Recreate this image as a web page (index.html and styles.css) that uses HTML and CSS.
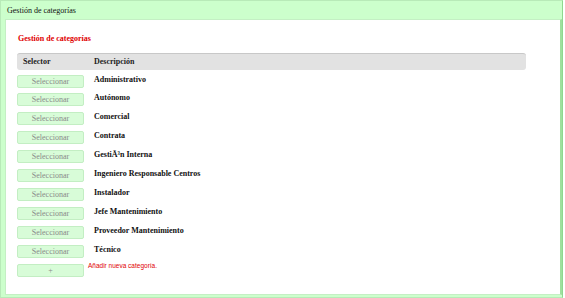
FILE: index.html
```html
<!DOCTYPE html>
<html lang="es">

<head>
  <meta charset="UTF-8">
  <title>Gestión de categorías</title>
  <link rel="stylesheet" href="styles.css">
</head>

<body>
  <div class="panel">
    <div class="panel-titulo">Gestión de categorías</div>

    <div class="contenido">
      <h2>Gestión de categorías</h2>

      <table class="categorias">
        <thead>
          <tr>
            <th class="col-selector">Selector</th>
            <th>Descripción</th>
          </tr>
        </thead>
        <tbody>
          <tr><td><button>Seleccionar</button></td><td>Administrativo</td></tr>
          <tr><td><button>Seleccionar</button></td><td>Autónomo</td></tr>
          <tr><td><button>Seleccionar</button></td><td>Comercial</td></tr>
          <tr><td><button>Seleccionar</button></td><td>Contrata</td></tr>
          <tr><td><button>Seleccionar</button></td><td>GestiÃ³n Interna</td></tr>
          <tr><td><button>Seleccionar</button></td><td>Ingeniero Responsable Centros</td></tr>
          <tr><td><button>Seleccionar</button></td><td>Instalador</td></tr>
          <tr><td><button>Seleccionar</button></td><td>Jefe Mantenimiento</td></tr>
          <tr><td><button>Seleccionar</button></td><td>Proveedor Mantenimiento</td></tr>
          <tr><td><button>Seleccionar</button></td><td>Técnico</td></tr>
          <tr class="nueva">
            <td><button>+</button></td>
            <td><span class="aviso">Añadir nueva categoría.</span></td>
          </tr>
        </tbody>
      </table>
    </div>
  </div>
</body>

</html>
```

FILE: styles.css
```css
body {
  font-family: "Liberation Serif", "Times New Roman", serif;
  background-color: #fff;
  margin: 0;
  padding: 0;
}

.panel {
  width: 561px;
  background-color: #ccffcc;
  border: 1px solid #b8eab8;
  border-right-color: #8fd88f;
  padding: 0 0 2px 0;
}

.panel-titulo {
  font-size: 8px;
  color: #111;
  padding: 5px 6px 3px;
  height: 10px;
}

.contenido {
  background-color: #fff;
  border: 1px solid #c4efc4;
  border-right: 2px solid #9fe09f;
  margin: 0 0 0 4px;
  padding: 14px 11px 0;
  height: 260px;
}

h2 {
  color: #e00000;
  font-size: 8px;
  font-weight: bold;
  margin: 0 0 10px 1px;
}

.categorias {
  width: 509px;
  border-collapse: separate;
  border-spacing: 0;
  font-size: 8px;
  line-height: 10px;
}

.categorias th {
  background-color: #e2e2e2;
  border-top: 1px solid #c8c8c8;
  text-align: left;
  font-weight: bold;
  color: #222;
  height: 16px;
  padding: 0 0 0 10px;
}

.categorias th:first-child {
  border-radius: 3px 0 0 3px;
  padding-left: 6px;
}

.categorias th:last-child {
  border-radius: 0 3px 3px 0;
}

.col-selector {
  width: 60px;
}

.categorias td {
  height: 14px;
  padding: 5px 0 0 0;
  vertical-align: top;
}

.categorias td + td {
  font-weight: bold;
  color: #111;
  height: 14px;
  padding: 5px 0 0 10px;
}

.categorias tbody tr + tr td {
  height: 15px;
  padding-top: 4px;
}

.categorias tbody tr + tr td + td {
  height: 15px;
  padding-top: 4px;
}

button {
  display: block;
  width: 67px;
  height: 13px;
  padding: 0;
  font-family: "Liberation Serif", serif;
  font-size: 8px;
  line-height: 11px;
  color: #8a8a8a;
  background-color: #d8fcd8;
  border: 1px solid #c3eec3;
  border-radius: 2px;
  cursor: pointer;
}

.categorias .nueva td + td {
  padding: 1px 0 0 4px;
  height: 18px;
}

.aviso {
  font-family: "Liberation Sans", Arial, sans-serif;
  font-weight: normal;
  font-size: 6.5px;
  color: #e00000;
}
```
